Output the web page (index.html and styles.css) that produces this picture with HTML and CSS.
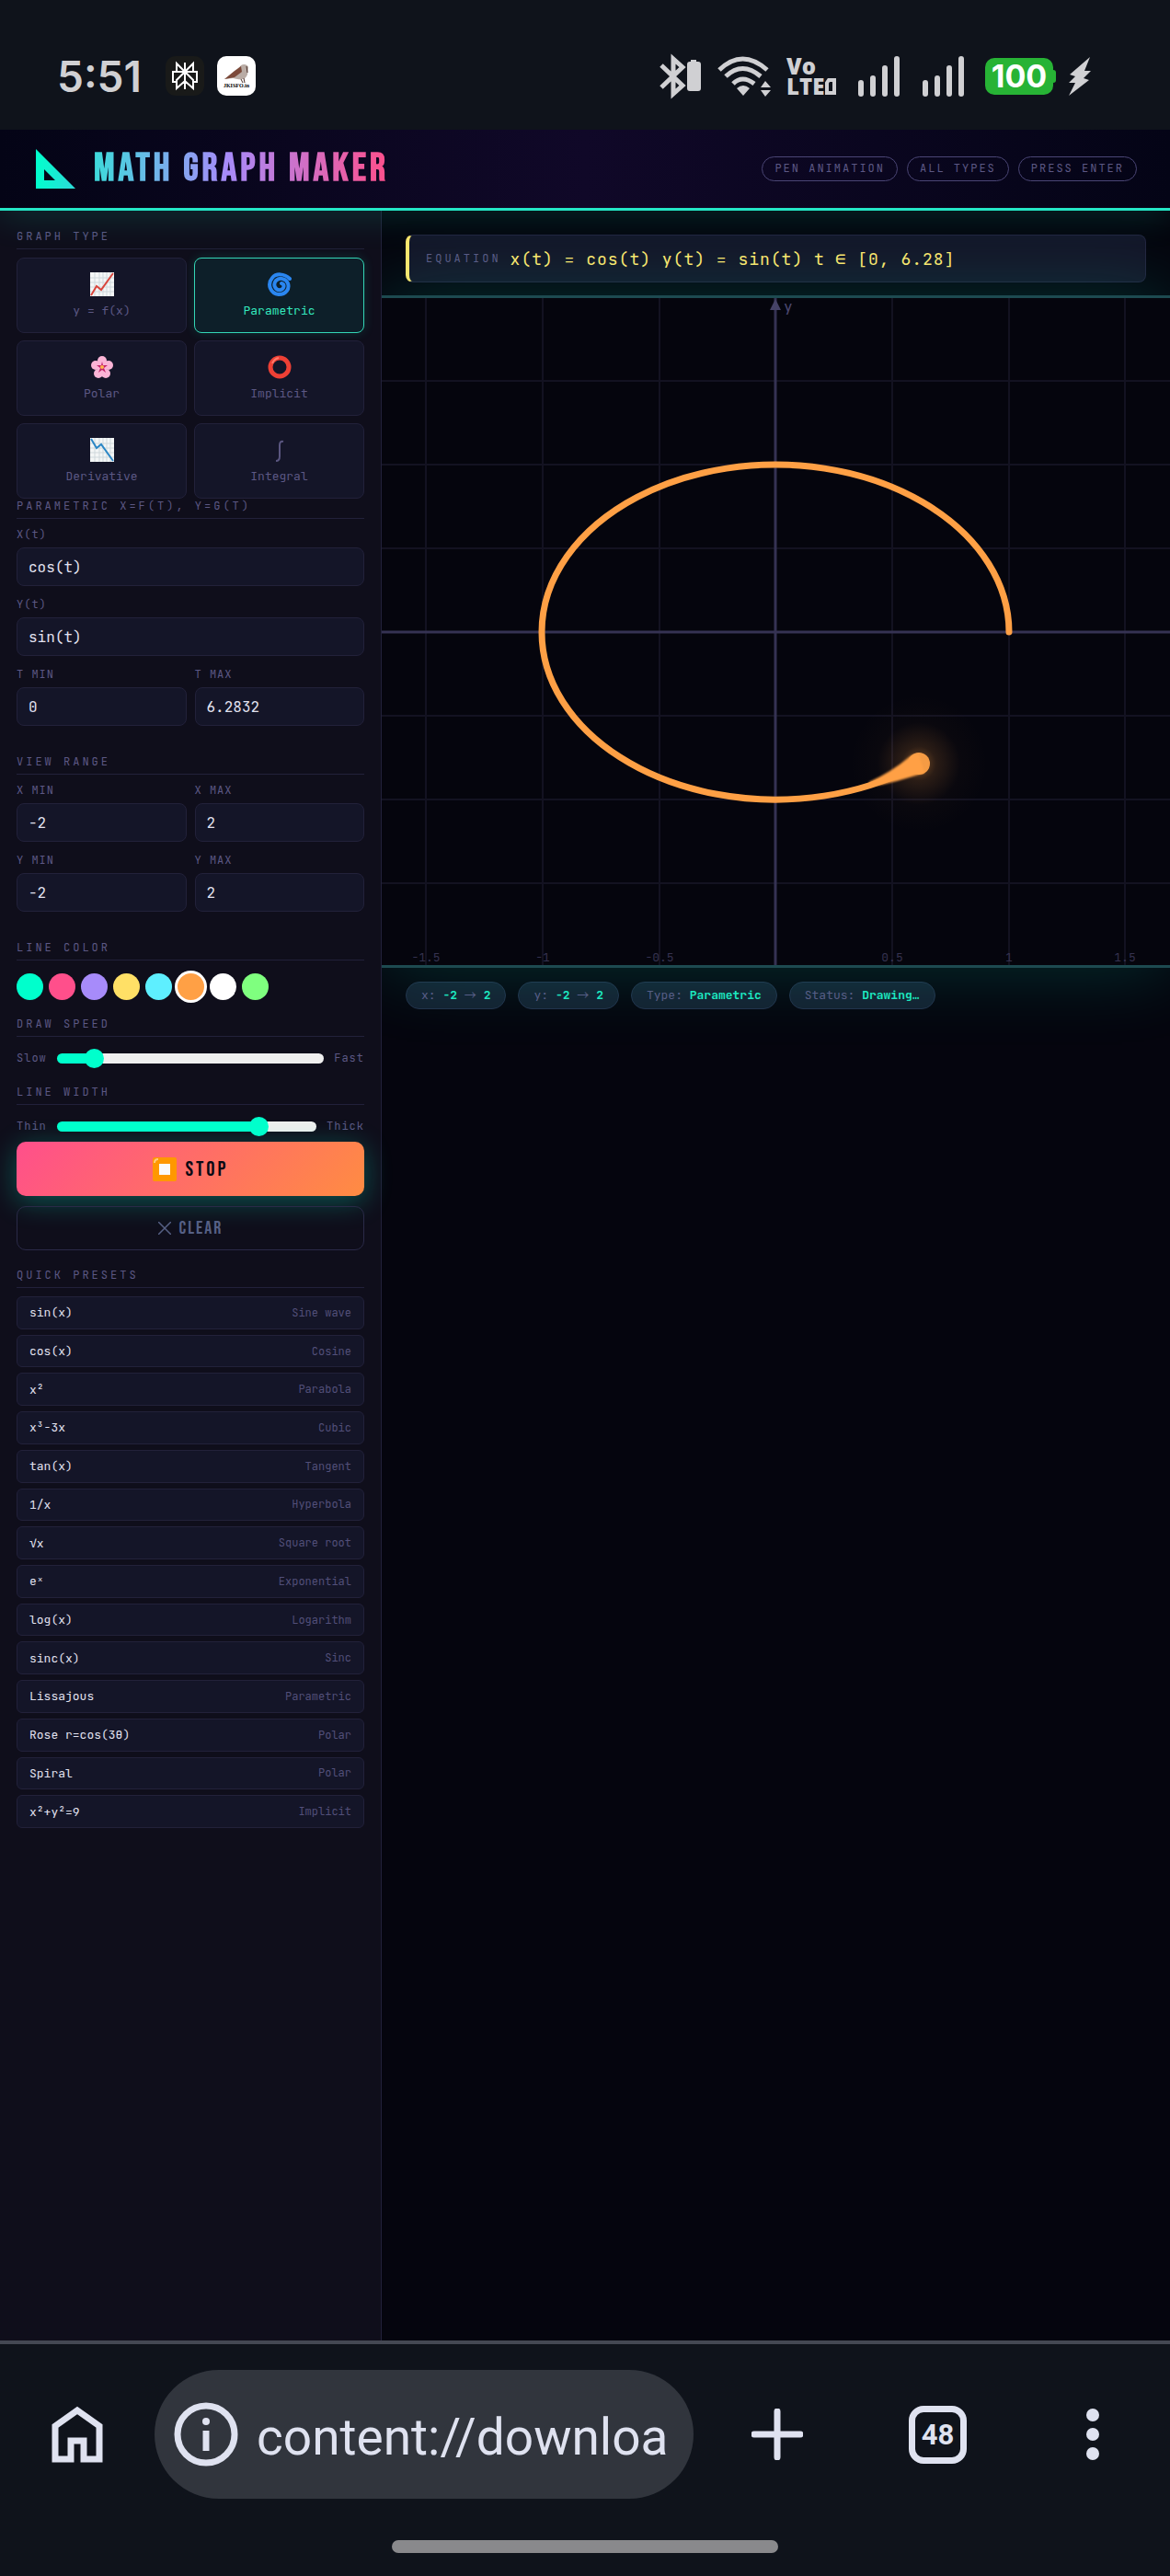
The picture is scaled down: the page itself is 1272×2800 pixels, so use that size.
FILE: index.html
```html
<!DOCTYPE html>
<html lang="en">
<head>
  <meta charset="UTF-8">
  <meta name="viewport" content="width=device-width, initial-scale=1.0">
  <title>Math Graph Maker</title>
  <link rel="stylesheet" href="styles.css">
</head>
<body>
  <!-- Phone status bar -->
  <div class="statusbar">
    <span class="clock">5:51</span>
    <svg class="app-icon" width="42" height="43" viewBox="0 0 42 43">
      <rect width="42" height="43" rx="11" fill="#191a19"/>
      <path d="M21 7v29M21 17L12 8v9M21 17l9-9v9M21 17h13v11h-4M21 17H8v11h4M21 17l-9 9v9l9-8 9 8v-9z" fill="none" stroke="#fff" stroke-width="2"/>
    </svg>
    <svg class="app-icon" width="42" height="43" viewBox="0 0 42 43">
      <rect width="42" height="43" rx="10" fill="#fff"/>
      <path d="M8 25l12-8 6-7c3-2 7-1 8 2l-1 8c-2 5-6 6-11 5l-5-1z" fill="#b9aca5"/>
      <path d="M8 25l11-9 7-5 1 6-8 6z" fill="#7c4a3a"/>
      <path d="M32 11l1 7M26 25l2 4M29 24l1 5" stroke="#4a3029" stroke-width="1"/>
      <text x="21" y="34" text-anchor="middle" class="app-text">JKISFO.in</text>
    </svg>
    <div class="status-icons">
      <svg width="46" height="44" viewBox="0 0 46 44">
        <path d="M2 10l23 22-10 9V3l10 9L2 34" fill="none" stroke="#d0d0d3" stroke-width="5"/>
        <path d="M34 4h6v2h2q3 0 3 3v26q0 3-3 3H33q-3 0-3-3V9q0-3 3-3h1z" fill="#d0d0d3"/>
      </svg>
      <svg width="60" height="44" viewBox="0 0 60 44">
        <path d="M3 15q25-24 52 0M10 22q18-17 38 0M18 30q10-10 23 0" fill="none" stroke="#d0d0d3" stroke-width="5"/>
        <path d="M22 35q7-6 14 0l-7 8zM48 34l5-7 6 7zM48 37h11l-6 7z" fill="#d0d0d3"/>
      </svg>
      <svg width="54" height="44" viewBox="0 0 54 44">
        <text class="volte"><tspan x="0" y="20">Vo</tspan><tspan x="0" y="42">LTE</tspan></text>
        <path d="M46 26h6v14h-8V29z" fill="none" stroke="#d0d0d3" stroke-width="4"/>
      </svg>
      <svg class="signal" width="46" height="44" viewBox="0 0 46 44">
        <path d="M3 29v12M16 24v17M29 13v28M42 3v38" stroke="#d0d0d3" stroke-width="6" stroke-linecap="round"/>
      </svg>
      <svg class="signal" width="46" height="44" viewBox="0 0 46 44">
        <path d="M3 29v12M16 24v17M29 13v28M42 3v38" stroke="#d0d0d3" stroke-width="6" stroke-linecap="round"/>
      </svg>
      <span class="battery">100</span>
      <svg width="26" height="44" viewBox="0 0 26 44">
        <path d="M24 1L2 20l6 2-7 7h7L1 43l22-17-6-2 8-8h-7z" fill="#d0d0d3"/>
      </svg>
    </div>
  </div>

  <!-- Header -->
  <header>
    <svg class="logo" width="43" height="43" viewBox="0 0 43 43">
      <defs>
        <linearGradient id="logoFill">
          <stop offset="0" stop-color="#00ffcc"/>
          <stop offset="1" stop-color="#2edad8"/>
        </linearGradient>
      </defs>
      <path d="M0 0l43 43H0zM9 22v12h12z" fill="url(#logoFill)" fill-rule="evenodd"/>
    </svg>
    <h1>MATH GRAPH MAKER</h1>
    <div class="badges">
      <span class="badge">PEN ANIMATION</span>
      <span class="badge">ALL TYPES</span>
      <span class="badge">PRESS ENTER</span>
    </div>
  </header>

  <div class="app">
    <!-- Sidebar -->
    <aside class="sidebar">
      <section>
        <h2>Graph Type</h2>
        <div class="type-grid">
          <button class="type-btn">
            <svg width="26" height="26" viewBox="0 0 26 26">
              <rect width="26" height="26" fill="#f4f6f6"/>
              <path d="M0 6h26M0 11h26M0 16h26M0 21h26M5 0v26M10 0v26M14 0v26M18 0v26M22 0v26" stroke="#cfd8dc"/>
              <path d="M1 25l6-10 5 4L25 1" fill="none" stroke="#d9453c" stroke-width="2"/>
            </svg>
            y = f(x)
          </button>
          <button class="type-btn active">
            <svg width="26" height="26" viewBox="0 0 26 26">
              <path d="M24 7C18 1 9 1 5 6-1 13 3 23 12 24c8 0 12-6 10-12-2-5-9-7-13-3-4 5 0 11 5 10 4-1 5-6 1-7" fill="none" stroke="#2a86f0" stroke-width="4" stroke-linecap="round"/>
            </svg>
            Parametric
          </button>
          <button class="type-btn">
            <svg width="26" height="26" viewBox="0 0 26 26">
              <g fill="#fbb4d6">
                <circle cx="13" cy="6" r="5"/>
                <circle cx="20" cy="11" r="5"/>
                <circle cx="17" cy="20" r="5"/>
                <circle cx="9" cy="20" r="5"/>
                <circle cx="6" cy="11" r="5"/>
                <circle cx="13" cy="13" r="5"/>
              </g>
              <path d="M13 7l1 4 5 0-4 3 2 5-4-3-4 3 2-5-4-3h5z" fill="#c2256b"/>
              <circle cx="13" cy="13" r="2" fill="#ffb74d"/>
            </svg>
            Polar
          </button>
          <button class="type-btn">
            <svg width="26" height="26" viewBox="0 0 26 26">
              <circle cx="13" cy="13" r="10" fill="none" stroke="#ee4035" stroke-width="5"/>
              <path d="M5 9q2-5 7-6" fill="none" stroke="#ff7a6b" stroke-width="2"/>
            </svg>
            Implicit
          </button>
          <button class="type-btn">
            <svg width="26" height="26" viewBox="0 0 26 26">
              <rect width="26" height="26" fill="#f4f6f6"/>
              <path d="M0 6h26M0 11h26M0 16h26M0 21h26M5 0v26M10 0v26M14 0v26M18 0v26M22 0v26" stroke="#cfd8dc"/>
              <path d="M1 1l6 10 5-4 13 18" fill="none" stroke="#2b86c5" stroke-width="2"/>
            </svg>
            Derivative
          </button>
          <button class="type-btn">
            <svg width="26" height="26" viewBox="0 0 26 26">
              <path d="M17 4q-4-1-4 4v12q0 5-4 5" fill="none" stroke="#5a5680" stroke-width="2"/>
            </svg>
            Integral
          </button>
        </div>
      </section>

      <section class="form-section">
        <h2>Parametric x=f(t), y=g(t)</h2>
        <div class="fields">
          <div class="field wide">
            <label for="xt">X(t)</label>
            <input type="text" id="xt" value="cos(t)">
          </div>
          <div class="field wide">
            <label for="yt">Y(t)</label>
            <input type="text" id="yt" value="sin(t)">
          </div>
          <div class="field">
            <label for="tmin">T MIN</label>
            <input type="text" id="tmin" value="0">
          </div>
          <div class="field">
            <label for="tmax">T MAX</label>
            <input type="text" id="tmax" value="6.2832">
          </div>
        </div>
      </section>

      <section class="form-section">
        <h2>View Range</h2>
        <div class="fields">
          <div class="field">
            <label for="xmin">X MIN</label>
            <input type="text" id="xmin" value="-2">
          </div>
          <div class="field">
            <label for="xmax">X MAX</label>
            <input type="text" id="xmax" value="2">
          </div>
          <div class="field">
            <label for="ymin">Y MIN</label>
            <input type="text" id="ymin" value="-2">
          </div>
          <div class="field">
            <label for="ymax">Y MAX</label>
            <input type="text" id="ymax" value="2">
          </div>
        </div>
      </section>

      <section class="color-section">
        <h2>Line Color</h2>
        <div class="swatches">
          <input type="radio" name="color" class="swatch mint" aria-label="Mint">
          <input type="radio" name="color" class="swatch pink" aria-label="Pink">
          <input type="radio" name="color" class="swatch purple" aria-label="Purple">
          <input type="radio" name="color" class="swatch yellow" aria-label="Yellow">
          <input type="radio" name="color" class="swatch cyan" aria-label="Cyan">
          <input type="radio" name="color" class="swatch orange" aria-label="Orange" checked>
          <input type="radio" name="color" class="swatch white" aria-label="White">
          <input type="radio" name="color" class="swatch green" aria-label="Green">
        </div>
      </section>

      <section class="slider-section">
        <h2 id="speed-title">Draw Speed</h2>
        <div class="slider-row">
          <span>Slow</span>
          <input type="range" min="1" max="10" value="2" aria-labelledby="speed-title" style="--fill: 14%">
          <span>Fast</span>
        </div>
      </section>

      <section>
        <h2 id="width-title">Line Width</h2>
        <div class="slider-row">
          <span>Thin</span>
          <input type="range" min="1" max="6" value="5" aria-labelledby="width-title" style="--fill: 78%">
          <span>Thick</span>
        </div>
      </section>

      <div class="buttons">
        <button class="btn-stop">
          <svg width="26" height="26" viewBox="0 0 26 26">
            <rect width="26" height="26" rx="2" fill="#ff9800"/>
            <path d="M2 6q0-4 4-4" fill="none" stroke="#ffcc80" stroke-width="2"/>
            <rect x="7" y="7" width="12" height="12" fill="#fafafa"/>
          </svg>
          STOP
        </button>
        <button class="btn-clear">
          <svg width="14" height="14" viewBox="0 0 14 14">
            <path d="M0 0l14 14M14 0L0 14" stroke="#566085" stroke-width="1.5"/>
          </svg>
          CLEAR
        </button>
      </div>

      <section>
        <h2>Quick Presets</h2>
        <div class="presets">
          <button class="preset">sin(x)<span>Sine wave</span></button>
          <button class="preset">cos(x)<span>Cosine</span></button>
          <button class="preset">x²<span>Parabola</span></button>
          <button class="preset">x³-3x<span>Cubic</span></button>
          <button class="preset">tan(x)<span>Tangent</span></button>
          <button class="preset">1/x<span>Hyperbola</span></button>
          <button class="preset">√x<span>Square root</span></button>
          <button class="preset">eˣ<span>Exponential</span></button>
          <button class="preset">log(x)<span>Logarithm</span></button>
          <button class="preset">sinc(x)<span>Sinc</span></button>
          <button class="preset">Lissajous<span>Parametric</span></button>
          <button class="preset">Rose r=cos(3θ)<span>Polar</span></button>
          <button class="preset">Spiral<span>Polar</span></button>
          <button class="preset">x²+y²=9<span>Implicit</span></button>
        </div>
      </section>
    </aside>

    <!-- Graph area -->
    <main>
      <div class="eq-bar">
        <div class="eq-box">
          <span class="eq-label">EQUATION</span>
          <span class="eq-text">x(t) = cos(t) y(t) = sin(t) t ∈ [0, 6.28]</span>
        </div>
      </div>

      <div class="graph">
        <svg viewBox="0 0 857 725">
          <defs>
            <radialGradient id="glow">
              <stop offset="0" stop-color="#ffa045" stop-opacity="0.45"/>
              <stop offset="0.25" stop-color="#ffa045" stop-opacity="0.15"/>
              <stop offset="0.6" stop-color="#ffa045" stop-opacity="0.02"/>
              <stop offset="1" stop-color="#ffa045" stop-opacity="0"/>
            </radialGradient>
            <filter id="soft">
              <feGaussianBlur stdDeviation="1.2"/>
            </filter>
          </defs>
          <path class="grid" d="M48 0v725M175 0v725M302 0v725M555 0v725M682 0v725M808 0v725M0 90h857M0 181h857M0 272h857M0 454h857M0 545h857M0 636h857"/>
          <path class="axis" d="M428 0v725M0 363h857"/>
          <path d="M428 1l6 12h-12z" fill="#454266"/>
          <text x="437" y="15" class="axis-name">y</text>
          <g class="ticks">
            <text x="48" y="721">-1.5</text>
            <text x="175" y="721">-1</text>
            <text x="302" y="721">-0.5</text>
            <text x="555" y="721">0.5</text>
            <text x="682" y="721">1</text>
            <text x="808" y="721">1.5</text>
          </g>
          <!-- Curve and pen head -->
          <path class="curve" d="M682 363A254 182 0 1 0 578 510"/>
          <circle cx="584" cy="506" r="75" fill="url(#glow)"/>
          <circle cx="584" cy="506" r="12" fill="#f59b44"/>
          <path d="M530 526Q554 515 572 500Q578 495 584 496L590 516Q574 521 560 525T530 531z" fill="#ffa045" filter="url(#soft)"/>
        </svg>
      </div>

      <div class="info-bar">
        <span class="chip">x: <b>-2</b> <i>→</i> <b>2</b></span>
        <span class="chip">y: <b>-2</b> <i>→</i> <b>2</b></span>
        <span class="chip">Type: <b>Parametric</b></span>
        <span class="chip">Status: <b>Drawing…</b></span>
      </div>
    </main>
  </div>

  <!-- Browser toolbar -->
  <footer>
    <nav class="toolbar">
      <button class="tool" aria-label="Home">
        <svg width="56" height="62" viewBox="0 0 56 62">
          <path d="M4 58V22L28 5l24 17v36H35V38H21v20z" fill="none" stroke="#dfe2f0" stroke-width="7"/>
        </svg>
      </button>
      <div class="url-pill">
        <svg width="70" height="70" viewBox="0 0 70 70">
          <circle cx="35" cy="35" r="31" fill="none" stroke="#dfe2f0" stroke-width="7"/>
          <circle cx="35" cy="21" r="4" fill="#dfe2f0"/>
          <path d="M35 31v22" stroke="#dfe2f0" stroke-width="7"/>
        </svg>
        <input type="text" class="url" value="content://downloads" aria-label="Address">
      </div>
      <div class="tools">
        <button class="tool" aria-label="New tab">
          <svg width="56" height="56" viewBox="0 0 56 56">
            <path d="M28 3v50M3 28h50" stroke="#dfe2f0" stroke-width="7" stroke-linecap="round"/>
          </svg>
        </button>
        <button class="tool tabs">48</button>
        <button class="tool" aria-label="Menu">
          <svg width="14" height="56" viewBox="0 0 14 56">
            <g fill="#dfe2f0">
              <circle cx="7" cy="7" r="7"/>
              <circle cx="7" cy="28" r="7"/>
              <circle cx="7" cy="49" r="7"/>
            </g>
          </svg>
        </button>
      </div>
    </nav>
    <div class="handle"></div>
  </footer>
</body>
</html>
```
FILE: styles.css
```css
:root {
  --mint: #00ffcc;
  --muted: #5c5884;
  --line: #22213a;
  --field: #141528;
  --panel: #0f0e1b;
  --mono: "JetBrains Mono", "DejaVu Sans Mono", "Liberation Mono", monospace;
  --display: "Bebas Neue", "Liberation Sans Narrow", "Roboto", sans-serif;
}
* {
  margin: 0;
  padding: 0;
  box-sizing: border-box;
}
body {
  background: #05050e;
  color: #e2e2f0;
  font-family: var(--mono);
  display: flex;
  flex-direction: column;
  min-height: 100vh;
}
button, input {
  font-family: inherit;
}
svg {
  display: block;
  flex-shrink: 0;
}

/* Phone status bar */
.statusbar {
  position: relative;
  z-index: 3;
  display: flex;
  align-items: center;
  height: 141px;
  padding: 24px 85px 0 62px;
  background: #0f131b;
}
.clock {
  font-family: "Inter", sans-serif;
  font-weight: 600;
  font-size: 46px;
  color: #d0d0d3;
  margin-right: 26px;
}
.app-icon {
  margin-right: 14px;
}
.app-text {
  font-family: "Liberation Serif", serif;
  font-weight: bold;
  font-size: 6px;
}
.status-icons {
  display: flex;
  align-items: center;
  margin-left: auto;
}
.status-icons > * {
  margin-left: 16px;
}
.status-icons svg {
  overflow: visible;
}
.status-icons .signal {
  margin-left: 24px;
}
.volte {
  font-family: "Open Sans", sans-serif;
  font-weight: 800;
  font-size: 24px;
  fill: #d0d0d3;
}
.status-icons .battery {
  position: relative;
  width: 74px;
  height: 40px;
  margin-left: 22px;
  border-radius: 10px;
  background: #27b335;
  color: #fff;
  font-family: "Inter", sans-serif;
  font-weight: 700;
  font-size: 34px;
  line-height: 40px;
  text-align: center;
}
.battery::after {
  content: "";
  position: absolute;
  left: 100%;
  top: 13px;
  width: 3px;
  height: 14px;
  border-radius: 0 3px 3px 0;
  background: #27b335;
}

/* Header */
header {
  position: relative;
  z-index: 2;
  display: flex;
  align-items: center;
  height: 88px;
  padding: 0 36px 0 39px;
  background: linear-gradient(90deg, #040416, #100828 50%, #040416);
  border-bottom: 3px solid #24e6c6;
  box-shadow: 0 4px 40px rgba(0, 255, 204, 0.15);
}
h1 {
  margin-left: 20px;
  font-family: var(--display);
  font-size: 42px;
  font-weight: 700;
  line-height: 44px;
  letter-spacing: 4px;
  background: linear-gradient(90deg, #3edadb, #a78bfa 45%, #ff4f8b);
  -webkit-background-clip: text;
  background-clip: text;
  color: transparent;
}
.badges {
  display: flex;
  gap: 10px;
  margin-left: auto;
}
.badge {
  padding: 0 13px;
  border: 1px solid #4a4575;
  border-radius: 14px;
  font-size: 12px;
  line-height: 25px;
  letter-spacing: 2px;
  color: var(--muted);
}

/* Layout */
.app {
  display: flex;
  flex: 1;
}
.sidebar {
  width: 415px;
  flex-shrink: 0;
  padding: 20px 18px;
  background: var(--panel);
  border-right: 1px solid var(--line);
}
h2 {
  margin-bottom: 9px;
  padding-bottom: 5px;
  border-bottom: 1px solid var(--line);
  font-size: 12px;
  font-weight: 400;
  line-height: 16px;
  letter-spacing: 3px;
  text-transform: uppercase;
  color: var(--muted);
}

/* Graph type */
.type-grid {
  display: grid;
  grid-template-columns: 1fr 1fr;
  gap: 8px;
}
.type-btn {
  display: flex;
  flex-direction: column;
  align-items: center;
  justify-content: center;
  gap: 8px;
  padding: 15px 0;
  background: var(--field);
  border: 1px solid var(--line);
  border-radius: 8px;
  color: var(--muted);
  font-size: 13px;
  line-height: 16px;
  cursor: pointer;
}
.type-btn.active {
  background: #0d1f29;
  border-color: #34d6b6;
  color: #34e8bd;
  box-shadow: 0 0 12px rgba(0, 255, 204, 0.15);
}

/* Fields */
.form-section {
  margin-bottom: 31px;
}
.fields {
  display: grid;
  grid-template-columns: 1fr 1fr;
  gap: 12px 9px;
}
.field {
  display: flex;
  flex-direction: column;
  gap: 6px;
}
.field.wide {
  grid-column: span 2;
}
.field label {
  font-size: 12px;
  line-height: 16px;
  letter-spacing: 1px;
  color: var(--muted);
}
.field input {
  width: 100%;
  height: 42px;
  padding: 0 12px;
  background: var(--field);
  border: 1px solid var(--line);
  border-radius: 8px;
  color: #e2e2f0;
  font-size: 16px;
}

/* Colors */
.color-section {
  margin-bottom: 18px;
}
.swatches {
  display: flex;
  gap: 6px;
  padding-top: 5px;
}
.swatch {
  appearance: none;
  width: 29px;
  height: 29px;
  border-radius: 50%;
  cursor: pointer;
}
.swatch:checked {
  box-shadow: 0 0 0 3px #fff;
}
.mint { background: #00ffcc; }
.pink { background: #ff4f8b; }
.purple { background: #a78bfa; }
.yellow { background: #ffe066; }
.cyan { background: #5eefff; }
.orange { background: #ffa045; }
.white { background: #fff; }
.green { background: #7fff7f; }

/* Sliders */
.slider-section {
  margin-bottom: 15px;
}
.slider-row {
  display: flex;
  align-items: center;
  gap: 11px;
  height: 28px;
  font-size: 12px;
  letter-spacing: 1px;
  color: var(--muted);
}
.slider-row input {
  appearance: none;
  flex: 1;
  min-width: 0;
  height: 11px;
  border-radius: 6px;
  background: linear-gradient(90deg, var(--mint) var(--fill), #efefef var(--fill));
}
.slider-row input::-webkit-slider-thumb {
  appearance: none;
  width: 21px;
  height: 21px;
  border-radius: 50%;
  background: var(--mint);
}

/* Buttons */
.buttons {
  display: flex;
  flex-direction: column;
  gap: 11px;
  margin: 3px 0 19px;
}
.buttons button {
  display: flex;
  align-items: center;
  justify-content: center;
  font-family: var(--display);
  border-radius: 10px;
  cursor: pointer;
}
.buttons .btn-stop {
  height: 59px;
  gap: 10px;
  border: none;
  background: linear-gradient(135deg, #ff4f8b, #ff8c42);
  box-shadow: 0 6px 30px rgba(0, 255, 204, 0.3);
  color: #0a0a14;
  font-size: 23px;
  letter-spacing: 3px;
}
.buttons .btn-clear {
  height: 48px;
  gap: 9px;
  background: transparent;
  border: 1px solid #2a2a48;
  color: #566085;
  font-size: 20px;
  letter-spacing: 2px;
}

/* Presets */
.presets {
  display: grid;
  grid-auto-rows: 1fr;
  gap: 6px;
  min-height: 578px;
}
.preset {
  display: flex;
  align-items: center;
  justify-content: space-between;
  padding: 0 13px;
  background: var(--field);
  border: 1px solid var(--line);
  border-radius: 6px;
  color: #e2e2f0;
  font-size: 13px;
  text-align: left;
  cursor: pointer;
}
.preset span {
  font-size: 12px;
  color: #524f79;
}

/* Graph area */
main {
  flex: 1;
  min-width: 0;
  overflow: hidden;
}
.eq-bar {
  padding: 26px;
  padding-bottom: 14px;
}
.eq-box {
  display: flex;
  align-items: center;
  gap: 10px;
  height: 52px;
  padding: 0 18px;
  background: #141528;
  border: 1px solid #23233e;
  border-left: 4px solid #ffe66d;
  border-radius: 8px;
}
.eq-label {
  font-size: 12px;
  letter-spacing: 3px;
  color: var(--muted);
}
.eq-text {
  font-size: 18px;
  letter-spacing: 1px;
  color: #ffe66d;
}
.graph {
  position: relative;
  border-top: 3px solid #1d4a50;
  border-bottom: 3px solid #1d4a50;
  background: #05050d;
  box-shadow: 0 0 80px rgba(0, 255, 204, 0.18);
}
.graph svg {
  width: 100%;
}
.grid {
  stroke: #131221;
  stroke-width: 2;
}
.axis {
  stroke: #353253;
  stroke-width: 3;
}
.axis-name {
  font-size: 16px;
  fill: #4b4870;
}
.ticks {
  font-size: 13px;
  fill: #35324f;
  text-anchor: middle;
}
.curve {
  fill: none;
  stroke: #ffa045;
  stroke-width: 7;
  stroke-linecap: round;
}
.info-bar {
  display: flex;
  flex-wrap: wrap;
  gap: 13px;
  padding: 15px 26px;
}
.chip {
  padding: 0 16px;
  background: #141f30;
  border: 1px solid #23304a;
  border-radius: 15px;
  font-size: 13px;
  line-height: 28px;
  color: var(--muted);
}
.chip b {
  color: #1fe8c0;
}
.chip i {
  font-family: "Noto Sans CJK JP", "DejaVu Sans", sans-serif;
  font-style: normal;
  line-height: 1;
}

/* Browser toolbar */
footer {
  background: #0f131b;
  border-top: 4px solid #444853;
  padding: 28px 0 25px;
}
.toolbar {
  display: flex;
  align-items: center;
  padding: 0 77px 0 56px;
}
.tool {
  background: none;
  border: none;
  cursor: pointer;
}
.url-pill {
  display: flex;
  align-items: center;
  flex: 1;
  min-width: 0;
  gap: 20px;
  height: 140px;
  margin: 0 63px 0 56px;
  padding: 0 28px 0 21px;
  border-radius: 70px;
  background: #31353d;
}
.url {
  flex: 1;
  min-width: 0;
  padding-top: 6px;
  background: none;
  border: none;
  color: #dfe2f0;
  font-family: "Roboto", sans-serif;
  font-size: 55px;
}
.tools {
  display: flex;
  align-items: center;
  justify-content: space-between;
  width: 378px;
}
.tool.tabs {
  width: 63px;
  height: 63px;
  margin-right: 15px;
  border: 7px solid #dfe2f0;
  border-radius: 16px;
  color: #dfe2f0;
  font-family: "Roboto", sans-serif;
  font-weight: 700;
  font-size: 31px;
}
.handle {
  width: 420px;
  max-width: 50%;
  height: 14px;
  margin: 45px auto 0;
  border-radius: 7px;
  background: #89898c;
}
```
